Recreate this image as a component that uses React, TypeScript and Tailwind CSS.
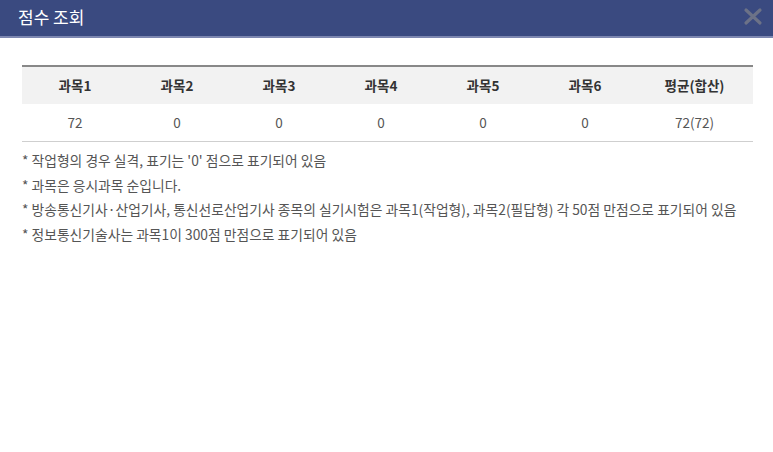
import React from "react";

const heads = ["과목1", "과목2", "과목3", "과목4", "과목5", "과목6", "평균(합산)"];
const vals = ["72", "0", "0", "0", "0", "0", "72(72)"];
const notes = [
  "* 작업형의 경우 실격, 표기는 '0' 점으로 표기되어 있음",
  "* 과목은 응시과목 순입니다.",
  "* 방송통신기사·산업기사, 통신선로산업기사 종목의 실기시험은 과목1(작업형), 과목2(필답형) 각 50점 만점으로 표기되어 있음",
  "* 정보통신기술사는 과목1이 300점 만점으로 표기되어 있음",
];

export default function App() {
  return (
    <div
      className="w-[773px] h-[452px] bg-white overflow-hidden"
      style={{ fontFamily: '"Noto Sans CJK KR", "Noto Sans", sans-serif' }}
    >
      <div className="h-[38px] bg-[#3a4a80] border-b-2 border-[#7d87b0] flex items-center justify-between pl-[18px] pr-[10px]">
        <span className="text-white text-[17px] leading-none -mt-[4px]">점수 조회</span>
        <svg width="20" height="19" viewBox="0 0 20 19" className="-mt-[4px]">
          <path d="M3 3L17 16M17 3L3 16" stroke="#6c7287" strokeWidth="3.2" strokeLinecap="round" />
        </svg>
      </div>
      <div className="pl-[22px] pt-[27px] w-[753px]">
        <div className="border-t-2 border-[#888] border-b border-b-[#cfcfcf]">
          <div className="grid grid-cols-[repeat(6,102px)_1fr] pl-[2px] bg-[#f2f2f2] h-[37px] items-center">
            {heads.map((h) => (
              <div key={h} className="text-center text-[13.5px] font-bold text-[#333]">
                {h}
              </div>
            ))}
          </div>
          <div className="grid grid-cols-[repeat(6,102px)_1fr] pl-[2px] h-[37px] items-center">
            {vals.map((v, i) => (
              <div key={i} className="text-center text-[13.5px] text-[#555]">
                {v}
              </div>
            ))}
          </div>
        </div>
        <div className="mt-[6px] flex flex-col">
          {notes.map((n) => (
            <div key={n} className="text-[13.8px] text-[#555] leading-[24.5px] whitespace-nowrap">
              {n}
            </div>
          ))}
        </div>
      </div>
    </div>
  );
}
